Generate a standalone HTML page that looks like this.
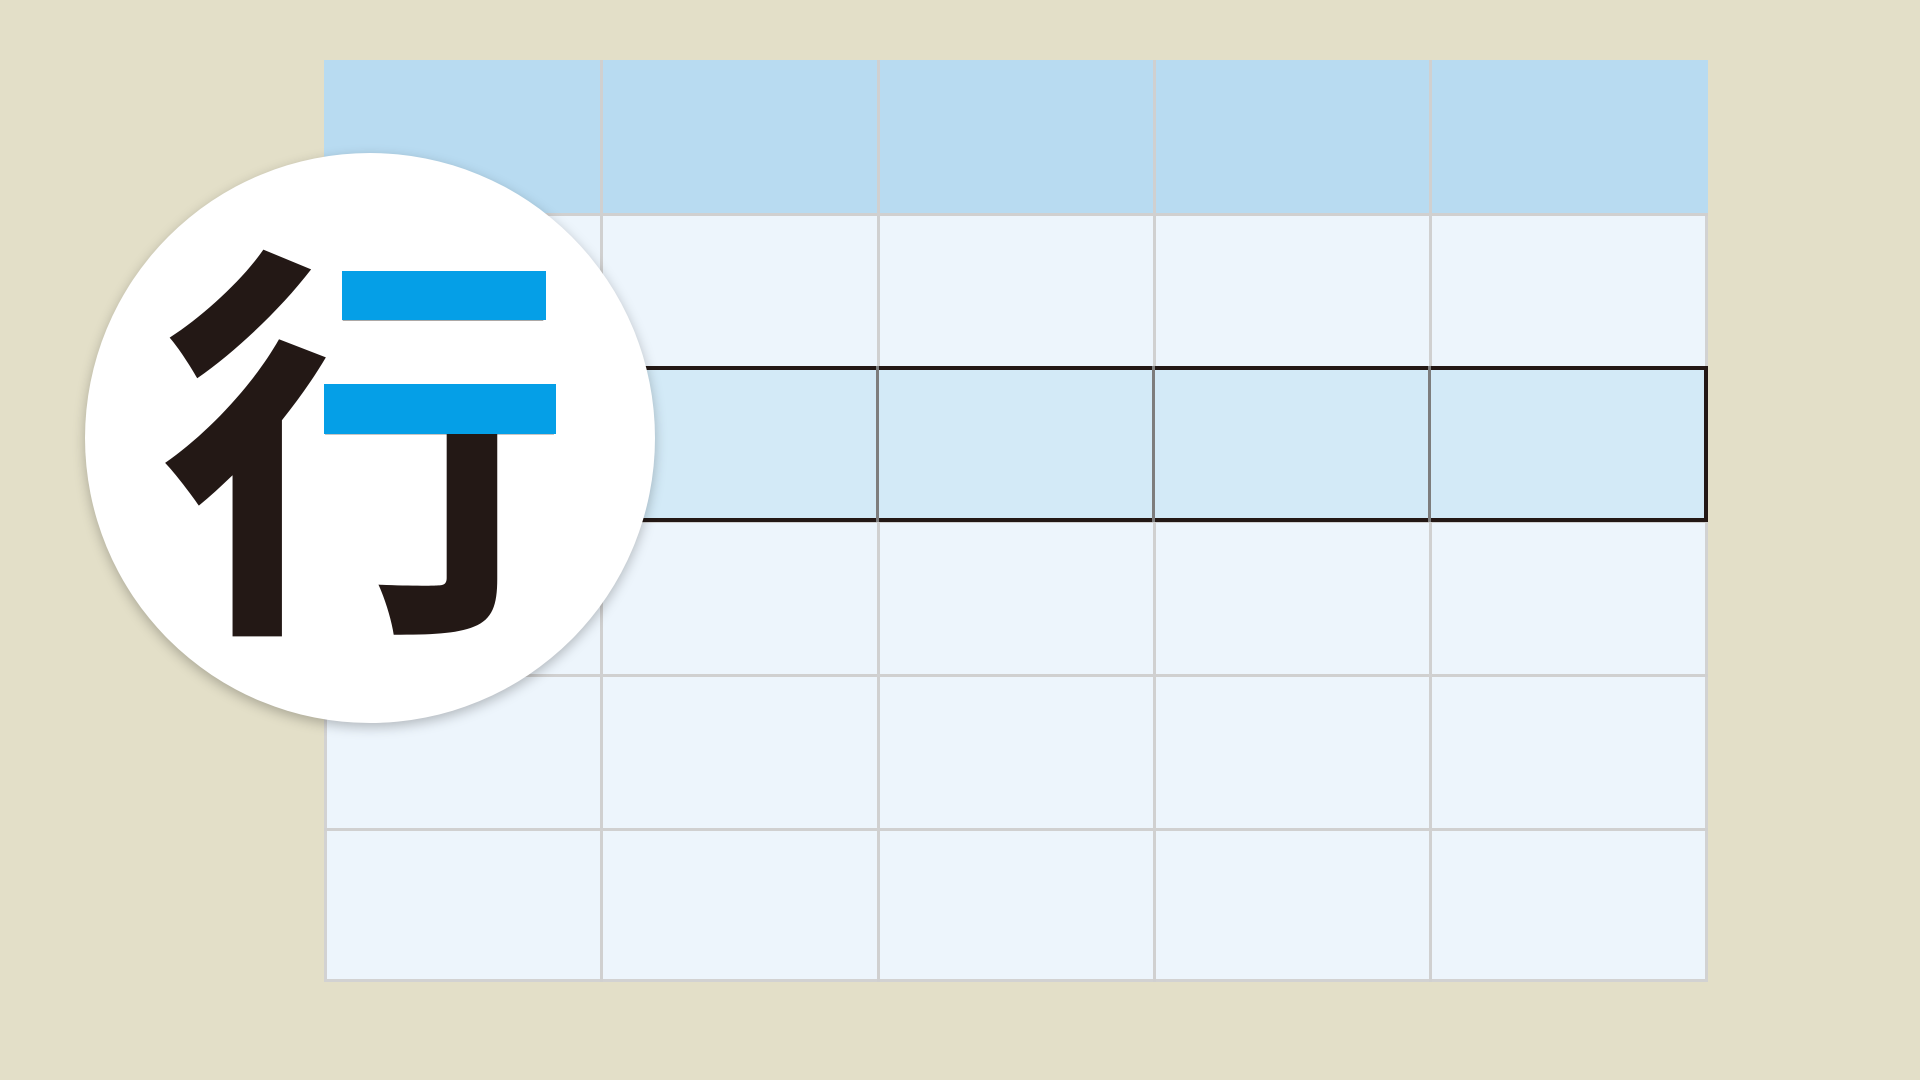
<!DOCTYPE html>
<html><head><meta charset="utf-8"><style>
html,body{margin:0;padding:0;width:1920px;height:1080px;overflow:hidden;background:#e3dfc8;position:relative}
.t{position:absolute;left:324px;top:60px;width:1384px;height:922px;background:#edf5fc;border:3px solid #d2d2d2;box-sizing:border-box}
.h{position:absolute;left:324px;top:60px;width:1384px;height:154px;background:#b8dbf1}
.v{position:absolute;top:60px;width:3px;height:922px;background:#d0d0d0}
.r{position:absolute;left:324px;width:1384px;height:3px;background:#d0d0d0}
.sel{position:absolute;left:560px;top:366px;width:1148px;height:156px;background:#d3eaf7;border:4px solid #231815;box-sizing:border-box}
.sv{position:absolute;top:366px;width:3px;height:156px;background:#7d7d7d}
.c{position:absolute;left:85px;top:153px;width:570px;height:570px;border-radius:50%;background:#fff;box-shadow:0 4px 12px rgba(0,0,0,.25)}
.k{position:absolute;left:159px;top:215px;width:411px;height:411px;font:700 411px/411px "Noto Sans CJK JP","Liberation Sans",sans-serif;color:#231815;text-align:center}
.b{position:absolute;background:#059fe7}
</style></head><body>
<div class="t"></div><div class="h"></div>
<div class="v" style="left:600px"></div><div class="v" style="left:877px"></div><div class="v" style="left:1153px"></div><div class="v" style="left:1429px"></div>
<div class="r" style="top:213px"></div><div class="r" style="top:367px"></div><div class="r" style="top:520px"></div><div class="r" style="top:674px"></div><div class="r" style="top:828px"></div>
<div class="sel"></div>
<div class="sv" style="left:876px"></div><div class="sv" style="left:1152px"></div><div class="sv" style="left:1428px"></div>
<div class="c"></div>
<div class="k">行</div>
<div class="b" style="left:342px;top:271px;width:204px;height:49px"></div>
<div class="b" style="left:324px;top:384px;width:232px;height:50px"></div>
</body></html>
